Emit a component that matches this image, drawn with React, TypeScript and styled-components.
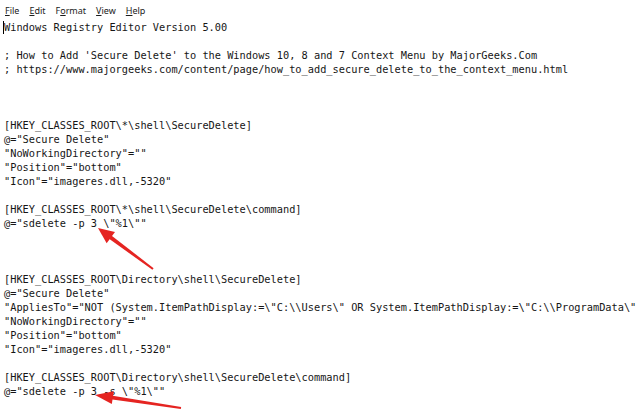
import styled, { createGlobalStyle } from 'styled-components';

const GlobalStyle = createGlobalStyle`
  html, body {
    margin: 0;
    padding: 0;
    background: #ffffff;
  }
`;

const lines: string[] = [
  'Windows Registry Editor Version 5.00',
  '',
  "; How to Add 'Secure Delete' to the Windows 10, 8 and 7 Context Menu by MajorGeeks.Com",
  '; https://www.majorgeeks.com/content/page/how_to_add_secure_delete_to_the_context_menu.html',
  '',
  '',
  '',
  '[HKEY_CLASSES_ROOT\\*\\shell\\SecureDelete]',
  '@="Secure Delete"',
  '"NoWorkingDirectory"=""',
  '"Position"="bottom"',
  '"Icon"="imageres.dll,-5320"',
  '',
  '[HKEY_CLASSES_ROOT\\*\\shell\\SecureDelete\\command]',
  '@="sdelete -p 3 \\"%1\\""',
  '',
  '',
  '',
  '[HKEY_CLASSES_ROOT\\Directory\\shell\\SecureDelete]',
  '@="Secure Delete"',
  '"AppliesTo"="NOT (System.ItemPathDisplay:=\\"C:\\\\Users\\" OR System.ItemPathDisplay:=\\"C:\\\\ProgramData\\"',
  '"NoWorkingDirectory"=""',
  '"Position"="bottom"',
  '"Icon"="imageres.dll,-5320"',
  '',
  '[HKEY_CLASSES_ROOT\\Directory\\shell\\SecureDelete\\command]',
  '@="sdelete -p 3 -s \\"%1\\""',
];

// which letter of each menu is the access key
const menus = [
  { label: 'File', key: 0 },
  { label: 'Edit', key: 0 },
  { label: 'Format', key: 1 },
  { label: 'View', key: 0 },
  { label: 'Help', key: 0 },
];

const Window = styled.div`
  position: relative;
  width: 640px;
  height: 416px;
  overflow: hidden;
  background: #ffffff;
`;

const MenuBar = styled.nav`
  display: flex;
  align-items: center;
  gap: 10px;
  height: 20px;
  padding-left: 5px;
  font-family: 'Noto Sans', 'Open Sans', sans-serif;
  font-size: 9px;
  color: #1b1b1b;
`;

const MenuItem = styled.span`
  padding-top: 1px;
`;

const AccessKey = styled.u`
  text-decoration: underline;
  text-underline-offset: 1px;
`;

const Editor = styled.div`
  padding-left: 4px;
  font-family: 'DejaVu Sans Mono', 'Liberation Mono', monospace;
  font-size: 10.3px;
  line-height: 14px;
  color: #161616;
  white-space: pre;
`;

const Line = styled.div`
  height: 14px;
`;

const Caret = styled.span`
  display: inline-block;
  width: 1px;
  height: 13px;
  margin-left: -1px;
  background: #000;
  vertical-align: -3px;
`;

const Overlay = styled.svg`
  position: absolute;
  left: 0;
  top: 0;
  pointer-events: none;
`;

interface ArrowProps {
  tip: [number, number];
  tail: [number, number];
  head?: number;
  half?: number;
}

const Arrow = ({ tip, tail, head = 16, half = 7 }: ArrowProps) => {
  const dx = tip[0] - tail[0];
  const dy = tip[1] - tail[1];
  const len = Math.hypot(dx, dy);
  const ux = dx / len;
  const uy = dy / len;
  const bx = tip[0] - ux * head;
  const by = tip[1] - uy * head;
  const nx = -uy;
  const ny = ux;

  const headPts = [
    `${tip[0]},${tip[1]}`,
    `${bx + nx * half},${by + ny * half}`,
    `${bx - nx * half},${by - ny * half}`,
  ].join(' ');

  // shaft gets a little thinner toward the tail
  const shaftPts = [
    `${tail[0] + nx},${tail[1] + ny}`,
    `${bx + ux * 2 + nx * 2},${by + uy * 2 + ny * 2}`,
    `${bx + ux * 2 - nx * 2},${by + uy * 2 - ny * 2}`,
    `${tail[0] - nx},${tail[1] - ny}`,
  ].join(' ');

  return (
    <g fill="#e52421">
      <polygon points={shaftPts} />
      <polygon points={headPts} />
    </g>
  );
};

export default function App() {
  return (
    <>
      <GlobalStyle />
      <Window>
        <MenuBar>
          {menus.map((m) => (
            <MenuItem key={m.label}>
              {m.label.slice(0, m.key)}
              <AccessKey>{m.label[m.key]}</AccessKey>
              {m.label.slice(m.key + 1)}
            </MenuItem>
          ))}
        </MenuBar>

        <Editor>
          {lines.map((text, i) => (
            <Line key={i}>
              {i === 0 && <Caret />}
              {text}
            </Line>
          ))}
        </Editor>

        <Overlay width="640" height="416" viewBox="0 0 640 416">
          <Arrow tip={[98, 228]} tail={[153, 269]} />
          <Arrow tip={[95, 395]} tail={[181, 408]} head={18} half={6.5} />
        </Overlay>
      </Window>
    </>
  );
}
